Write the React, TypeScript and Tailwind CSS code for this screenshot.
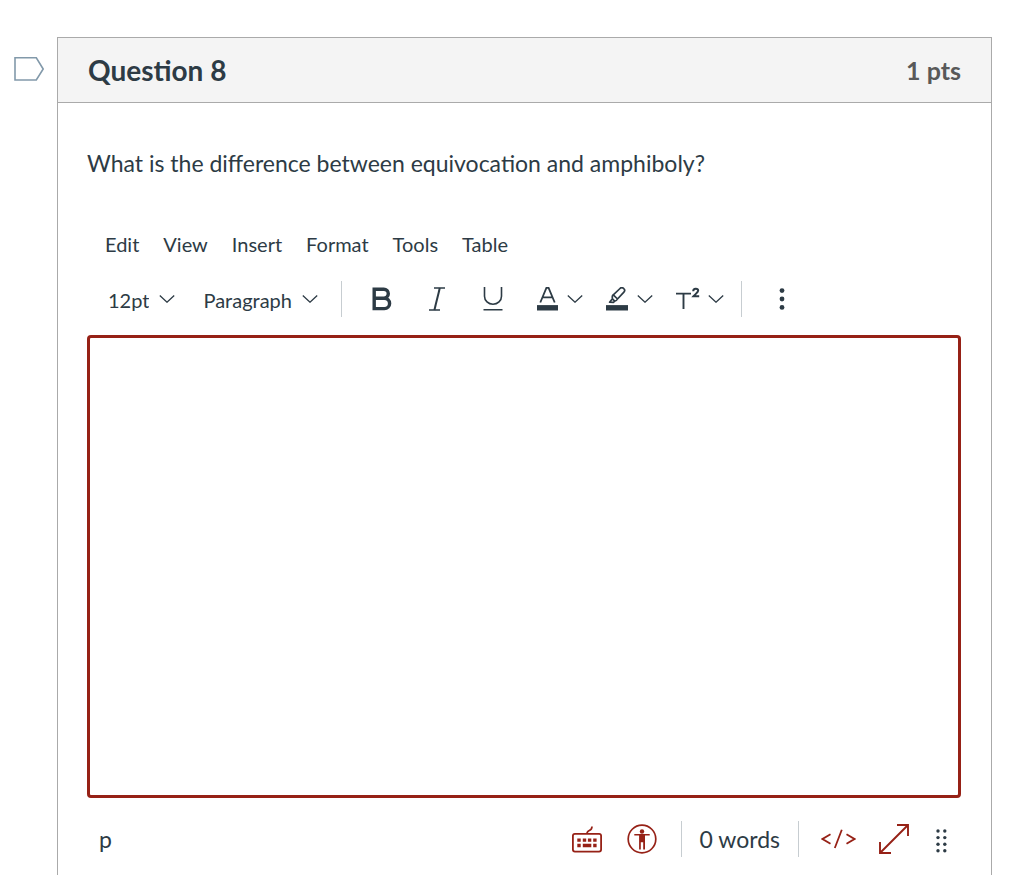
import { useState } from 'react'
import type { ReactNode } from 'react'

const menus = ['Edit', 'View', 'Insert', 'Format', 'Tools', 'Table']

function Chevron() {
  return (
    <svg className="w-4 h-2 shrink-0" viewBox="0 0 16 8" fill="none" stroke="currentColor" strokeWidth="1.3">
      <path d="M.8.5 8 7.2 15.2.5" />
    </svg>
  )
}

function Divider({ className = '' }: { className?: string }) {
  return <div className={`w-px h-9 shrink-0 bg-[#c7cdd1] ${className}`} />
}

type PickerProps = {
  label: string
  options: string[]
}

function Picker({ label, options }: PickerProps) {
  return (
    <div className="relative flex items-center">
      <select
        aria-label={label}
        className="appearance-none field-sizing-content bg-transparent pt-0.5 pr-[26px] text-xl leading-7 outline-none"
      >
        {options.map((option) => (
          <option key={option}>{option}</option>
        ))}
      </select>
      <span className="absolute right-0 pointer-events-none">
        <Chevron />
      </span>
    </div>
  )
}

type IconButtonProps = {
  label: string
  className?: string
  children: ReactNode
}

function IconButton({ label, className = '', children }: IconButtonProps) {
  return (
    <button type="button" aria-label={label} className={`flex items-center shrink-0 ${className}`}>
      {children}
    </button>
  )
}

function BoldIcon() {
  return (
    <svg className="w-5 h-6" viewBox="0 0 20 24" fill="none" stroke="currentColor" strokeWidth="3.4">
      <path d="M2.2 2.2H11.8a4.5 4.5 0 0 1 0 9H2.2zM2.2 11.2H12.4a5.2 5.2 0 0 1 0 10.4H2.2z" />
    </svg>
  )
}

function ItalicIcon() {
  return (
    <svg className="w-4 h-6" viewBox="0 0 16 24" fill="none" stroke="currentColor">
      <path strokeWidth="1.5" d="M5 1H16M0 23H11" />
      <path strokeWidth="2" d="M10.8 1 5.4 23" />
    </svg>
  )
}

function UnderlineIcon() {
  return (
    <svg className="w-5 h-6" viewBox="0 0 20 24" fill="none" stroke="currentColor" strokeWidth="1.6">
      <path d="M1.5 0V9.3a8.5 8 0 0 0 17 0V0M.5 22.8H19.5" />
    </svg>
  )
}

function TextColorIcon() {
  return (
    <svg className="w-[21px] h-6" viewBox="0 0 21 24" fill="none" stroke="currentColor">
      <path strokeWidth="1.8" d="M3.3 15.5 9.4.9h2.2l6.1 14.6M5.5 10.3h10" />
      <path strokeWidth="5.4" d="M0 20.8H21" />
    </svg>
  )
}

function HighlightIcon() {
  return (
    <svg className="w-[22px] h-6" viewBox="0 0 22 24" fill="none" stroke="currentColor">
      <path
        strokeWidth="1.7"
        strokeLinejoin="round"
        d="M7.3 7.8 14 1.5a2.7 2.7 0 0 1 3.8.1 2.5 2.5 0 0 1 .1 3.5L11.5 12M7.3 7.8a2.6 2.6 0 0 0-1 2.5l.1 1.5-2.8 3.4 4 .1 1.1-1.2c1.3-.1 2.2-.8 2.8-2.1M7.3 7.8 11.5 12M6.4 11.8l2.3 2.3"
      />
      <path strokeWidth="5.4" d="M0 20.8H22" />
    </svg>
  )
}

function SuperscriptIcon() {
  return (
    <svg className="w-6 h-6" viewBox="0 0 24 24" fill="none" stroke="currentColor">
      <path strokeWidth="1.9" d="M0 6.6H15M7.5 6.6V22" />
      <path strokeWidth="2" d="M17.2 4.2C17.2.9 22 .9 22.2 3.6c0 1.8-2.8 3.4-4.7 5.6H23.2" />
    </svg>
  )
}

function KeyboardIcon() {
  return (
    <svg className="w-[30px] h-[30px]" viewBox="0 0 30 30" fill="none" stroke="currentColor">
      <rect x=".9" y="9.8" width="28.2" height="17.8" rx="2" strokeWidth="1.8" />
      <path strokeWidth="1.7" d="M15 9.8C14.8 5 20 8 20 2.5" />
      <path strokeWidth="3.4" d="M5.3 16.1h3.4M10.8 16.1h3.4M15.9 16.1h3.4M21.2 16.1h3.4M5.3 21.5h3.4M10.8 21.5h8.5M21.2 21.5h3.4" />
    </svg>
  )
}

function AccessibilityIcon() {
  return (
    <svg className="w-[30px] h-[30px]" viewBox="0 0 30 30" fill="currentColor">
      <circle cx="15" cy="15" r="13.8" fill="none" stroke="currentColor" strokeWidth="1.7" />
      <circle cx="15" cy="7.5" r="2.2" />
      <path d="M7.3 9.9H22.7V11.5H18V25.5H16.2V18.3H13.8V25.5H12.1V11.5H7.3z" />
    </svg>
  )
}

function CodeIcon() {
  return (
    <svg className="w-[35px] h-5" viewBox="0 0 35 20" fill="none" stroke="currentColor" strokeWidth="1.8">
      <path d="M9.5 5.2 1.5 10l8 4.8M25.5 5.2l8 4.8-8 4.8M20.8.8 13.8 19" />
    </svg>
  )
}

function ExpandIcon() {
  return (
    <svg className="w-[30px] h-[30px]" viewBox="0 0 30 30" fill="none" stroke="currentColor" strokeWidth="1.9">
      <path d="M18 1H29V12M1 18V29H12M29 1 1 29" />
    </svg>
  )
}

function GripIcon() {
  return (
    <svg className="w-[11px] h-6" viewBox="0 0 11 24" fill="currentColor">
      {[2, 8.6, 15.2, 21.8].map((y) => (
        <g key={y}>
          <circle cx="2" cy={y} r="1.7" />
          <circle cx="8.8" cy={y} r="1.7" />
        </g>
      ))}
    </svg>
  )
}

function App() {
  const [answer, setAnswer] = useState('')
  const words = answer.trim() ? answer.trim().split(/\s+/).length : 0

  return (
    <div className="min-h-screen flex items-stretch gap-[13px] bg-white pt-[37px] pl-3.5 pr-8 font-['Lato',sans-serif] text-[#2d3b45]">
      <IconButton label="Flag question" className="self-start mt-5 text-[#8299aa]">
        <svg className="w-[30px] h-6" viewBox="0 0 30 24" fill="none" stroke="currentColor" strokeWidth="1.6">
          <path d="M1 .8H22.3L29.2 12 22.3 23H1z" />
        </svg>
      </IconButton>

      <main className="flex-1 min-w-0 border border-b-0 border-[#aaa]">
        <header className="flex items-center justify-between h-[65px] px-[30px] bg-[#f4f4f4] border-b border-[#aaa]">
          <h1 className="text-[28px] leading-8 font-bold">Question 8</h1>
          <span className="text-[25px] leading-8 font-bold text-[#595959]">1 pts</span>
        </header>

        <div className="pl-[29px] pr-[30px] pt-11">
          <p className="text-[23px] leading-8">What is the difference between equivocation and amphiboly?</p>

          <div className="flex items-center gap-6 mt-[49px] pl-[18px]">
            {menus.map((menu) => (
              <button key={menu} type="button" className="text-xl leading-8">
                {menu}
              </button>
            ))}
          </div>

          <div className="flex items-center h-9 mt-[21px] pl-[21px]">
            <Picker label="Font size" options={['12pt', '14pt', '18pt']} />
            <div className="ml-7">
              <Picker label="Block style" options={['Paragraph', 'Heading 2', 'Heading 3']} />
            </div>
            <Divider className="ml-[23px]" />
            <IconButton label="Bold" className="ml-[30px]">
              <BoldIcon />
            </IconButton>
            <IconButton label="Italic" className="ml-[37px]">
              <ItalicIcon />
            </IconButton>
            <IconButton label="Underline" className="ml-[38px]">
              <UnderlineIcon />
            </IconButton>
            <IconButton label="Text color" className="ml-[34px] gap-[9px]">
              <TextColorIcon />
              <Chevron />
            </IconButton>
            <IconButton label="Highlight color" className="ml-[23px] gap-[9px]">
              <HighlightIcon />
              <Chevron />
            </IconButton>
            <IconButton label="Superscript" className="ml-[23px] gap-2">
              <SuperscriptIcon />
              <Chevron />
            </IconButton>
            <Divider className="ml-[17px]" />
            <IconButton label="More" className="ml-[37px]">
              <svg className="w-1.5 h-6" viewBox="0 0 6 24" fill="currentColor">
                <circle cx="3" cy="3.6" r="2.4" />
                <circle cx="3" cy="12" r="2.4" />
                <circle cx="3" cy="20.4" r="2.4" />
              </svg>
            </IconButton>
          </div>

          <textarea
            aria-label="Answer"
            value={answer}
            onChange={(e) => setAnswer(e.target.value)}
            className="block w-full h-[463px] mt-[18px] p-4 text-[23px] border-3 border-[#962116] rounded-[4px] resize-none outline-none"
          />

          <footer className="flex items-center h-9 mt-[23px] pl-3 pr-3.5 text-[23px] leading-8">
            <span>p</span>
            <div className="flex items-center ml-auto">
              <IconButton label="Keyboard shortcuts" className="text-[#962116]">
                <KeyboardIcon />
              </IconButton>
              <IconButton label="Accessibility checker" className="ml-[25px] text-[#962116]">
                <AccessibilityIcon />
              </IconButton>
              <Divider className="ml-6" />
              <span className="mx-[18px]">{words} words</span>
              <Divider />
              <IconButton label="HTML editor" className="ml-[22px] text-[#962116]">
                <CodeIcon />
              </IconButton>
              <IconButton label="Fullscreen" className="ml-[23px] text-[#962116]">
                <ExpandIcon />
              </IconButton>
              <IconButton label="Resize" className="ml-[27px] pt-1">
                <GripIcon />
              </IconButton>
            </div>
          </footer>
        </div>
      </main>
    </div>
  )
}

export default App
